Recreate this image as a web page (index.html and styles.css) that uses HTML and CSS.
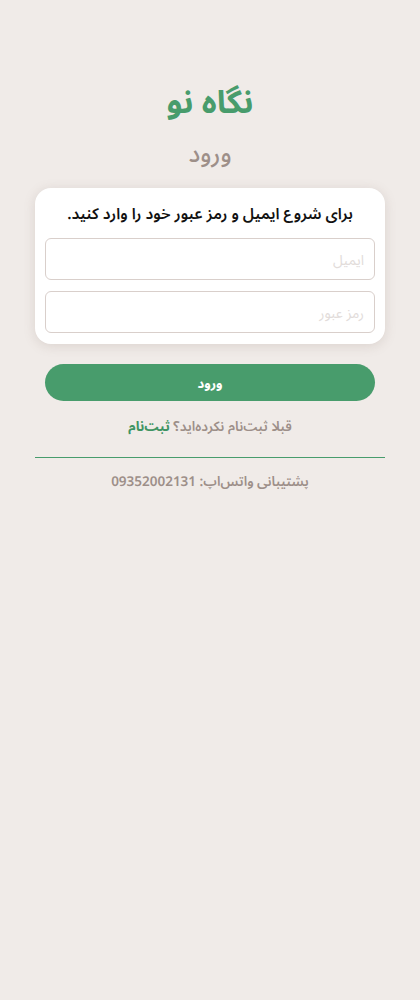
FILE: index.html
```html
<!DOCTYPE html>
<html lang="fa" dir="rtl">
<head>
<meta charset="utf-8">
<title>ورود</title>
<link rel="stylesheet" href="styles.css">
</head>
<body>
<main class="page">
  <h1 class="brand">نگاه نو</h1>
  <h2 class="heading">ورود</h2>
  <form class="card">
    <p class="card-title">برای شروع ایمیل و رمز عبور خود را وارد کنید.</p>
    <input class="field" type="email" placeholder="ایمیل">
    <input class="field" type="password" placeholder="رمز عبور">
  </form>
  <button class="submit" type="button">ورود</button>
  <p class="signup">قبلا ثبت‌نام نکرده‌اید؟ <a class="signup-link" href="#">ثبت‌نام</a></p>
  <div class="divider"></div>
  <p class="support">پشتیبانی واتس‌اپ: 09352002131</p>
</main>
</body>
</html>
```
FILE: styles.css
```css
html, body {
  margin: 0;
  padding: 0;
  background: #f0ebe8;
}
body {
  font-family: "Noto Sans Arabic UI", "Noto Sans Arabic", "DejaVu Sans", "Noto Sans", sans-serif;
}
.page {
  width: 350px;
  margin: 0 auto;
  padding-top: 79px;
  display: flex;
  flex-direction: column;
  align-items: stretch;
}
.brand {
  margin: 0;
  text-align: center;
  color: #489c6c;
  font-size: 32px;
  font-weight: 700;
  line-height: 44px;
}
.heading {
  margin: 11px 0 0;
  text-align: center;
  color: #9d8f89;
  font-size: 24px;
  font-weight: 500;
  line-height: 38px;
}
.card {
  margin-top: 16px;
  background: #ffffff;
  border-radius: 16px;
  padding: 12px 10px 11px;
  display: flex;
  flex-direction: column;
  gap: 11px;
  box-shadow: 0 2px 12px rgba(120, 100, 90, 0.18);
}
.card-title {
  margin: 0 0 1px;
  text-align: center;
  font-size: 15.5px;
  font-weight: 600;
  color: #111;
  line-height: 26px;
}
.field {
  height: 42px;
  box-sizing: border-box;
  border: 1px solid #d9cfcb;
  border-radius: 6px;
  padding: 0 10px;
  font-family: inherit;
  font-size: 14px;
  direction: rtl;
  background: #fff;
}
.field::placeholder {
  color: #e2dcda;
}
.submit {
  margin: 20px 10px 0;
  height: 37px;
  border: none;
  border-radius: 19px;
  background: #489c6c;
  color: #fff;
  font-family: inherit;
  font-size: 13px;
  font-weight: 700;
}
.signup {
  margin: 16px 0 0;
  text-align: center;
  color: #9d8f89;
  font-size: 13.5px;
  font-weight: 600;
  line-height: 18px;
}
.signup-link {
  color: #3f9463;
  text-decoration: none;
  font-weight: 700;
}
.divider {
  margin-top: 22px;
  height: 1px;
  background: #489c6c;
}
.support {
  margin: 14px 0 0;
  text-align: center;
  color: #9d8f89;
  font-size: 13.5px;
  font-weight: 600;
  line-height: 18px;
}
```
